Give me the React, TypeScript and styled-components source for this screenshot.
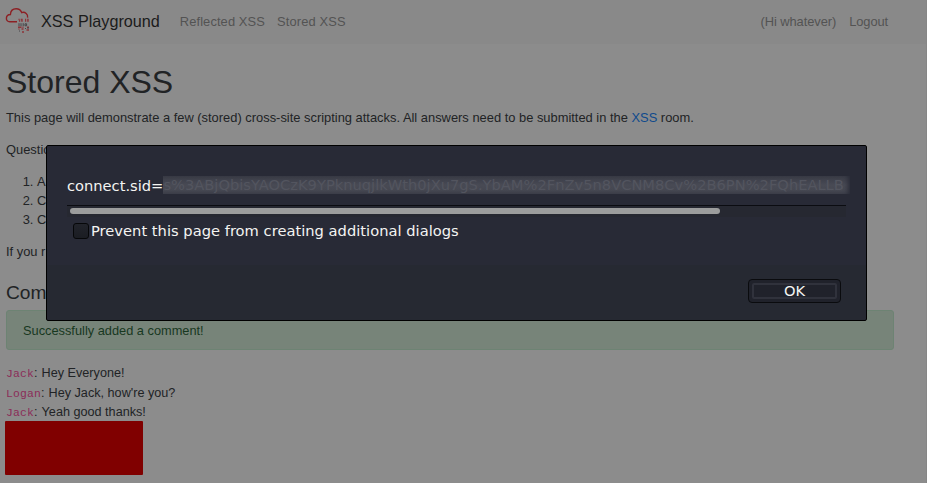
import React from 'react';
import styled, { createGlobalStyle } from 'styled-components';

const GlobalStyle = createGlobalStyle`
  * { box-sizing: border-box; }
  html, body { margin: 0; height: 483px; overflow: hidden; background: #8c8c8c; }
  body { font: 12.9px/19px "Liberation Sans", Arial, sans-serif; color: #212325; }
`;

const Page = styled.div`
  height: 483px;
  overflow: hidden;
  border-right: 1px solid #868686;
`;
const Navbar = styled.nav`
  height: 44px;
  display: flex;
  align-items: center;
  padding: 0 38px 2px 5px;
  background: #898989;
  color: #535353;
`;
const Brand = styled.div`
  font-size: 16.2px;
  color: #1b1b1b;
  margin: 0 20px 0 10px;
`;
const NavItem = styled.span<{ $gap?: number; $spacing?: number }>`
  margin-right: ${(p) => p.$gap ?? 0}px;
  letter-spacing: ${(p) => p.$spacing ?? 0}px;
  white-space: nowrap;
`;
const Spacer = styled.div`
  flex: 1;
`;
const Content = styled.main`
  padding: 18px 32px 0 6px;
`;
const Title = styled.h1`
  margin: 0 0 6px;
  font-size: 32px;
  line-height: 40px;
  font-weight: 400;
`;
const Paragraph = styled.p`
  margin: 0 0 13px;
  line-height: 19px;
`;
const Link = styled.span`
  color: #0f4a8c;
`;
const Questions = styled.ol`
  margin: 0 0 13px;
  padding-left: 31px;
`;
const Subtitle = styled.h2`
  margin: 20px 0 5px;
  font-size: 19.2px;
  line-height: 24px;
  font-weight: 400;
`;
const Alert = styled.div`
  height: 40px;
  padding: 10px 16px;
  margin-bottom: 14px;
  border: 1px solid #6d8373;
  border-radius: 3px;
  background: #778479;
  color: #17381f;
  font-size: 12.8px;
`;
const Comment = styled.div`
  height: 19.5px;
  line-height: 19px;
  font-size: 12.65px;
`;
const Author = styled.code`
  font: 11.4px "Liberation Mono", monospace;
  letter-spacing: 0.15px;
  color: #8b2d59;
`;
const CommentText = styled.span`
  margin-left: 0.6px;
`;
const RedBox = styled.div`
  width: 138px;
  height: 54px;
  margin: -2px 0 0 -1px;
  border-radius: 1px;
  background: #800000;
`;

const Dialog = styled.section`
  position: absolute;
  left: 46px;
  top: 145px;
  width: 821px;
  height: 176px;
  padding: 30px 20px 0;
  border: 1px solid #000;
  border-radius: 2px;
  background: linear-gradient(#282a36 0 119px, #262932 119px);
  color: #f4f4f2;
  font: 14.67px/20px "DejaVu Sans", sans-serif;
`;
const Message = styled.div`
  display: flex;
  height: 29px;
  width: 784px;
  white-space: nowrap;
`;
const Redacted = styled.span`
  flex: 0 0 687px;
  height: 18px;
  line-height: 18px;
  overflow: hidden;
  color: #53555f;
  background: linear-gradient(#393b46, #484a54 50%, #454751 80%, #3d3f4a);
  box-shadow: inset -5px 0 5px -3px #282a36;
`;
const ScrollTrack = styled.div`
  width: 779px;
  height: 12px;
  padding: 3px;
  border-top: 1px solid #0b0c11;
  background: #262831;
`;
const ScrollThumb = styled.div`
  width: 650px;
  height: 6px;
  margin-top: -1px;
  border-radius: 3px;
  background: #9c9d9d;
`;
const Option = styled.label`
  display: flex;
  align-items: center;
  gap: 2px;
  margin: 4px 0 0 6px;
  height: 20px;
  letter-spacing: 0.02px;
`;
const CheckBox = styled.span`
  width: 16px;
  height: 16px;
  border: 1px solid #060709;
  border-radius: 3px;
  background: linear-gradient(#22242b, #1b1d23);
`;
const Actions = styled.div`
  display: flex;
  justify-content: flex-end;
  margin: 38px 5px 0 0;
`;
const OkButton = styled.button`
  width: 93px;
  height: 24px;
  padding: 3px;
  border: 1px solid #0a0b0e;
  border-radius: 4px;
  background: #20222b;
  color: inherit;
  font: inherit;
`;
const FocusRing = styled.span`
  display: block;
  height: 16px;
  border: 2px solid #30323c;
  border-radius: 2px;
  line-height: 11px;
`;

const CloudLogo = () => (
  <svg width="26" height="28" viewBox="0 0 26 28" fill="none">
    <path
      d="M12 14.8H4.8C2.4 14.8 1.3 13 1.4 11.1C1.5 8.9 3 7.6 5.4 7.5C5.7 3.9 8 1.8 11.1 1.8C14 1.8 15.9 3.4 16.7 5.6C20.1 4.5 23.3 7.3 22.6 10.6"
      stroke="#8d2024"
      strokeWidth="1.4"
    />
    <path
      d="M13.5 12.5h1.2m1 0h2M20 12.5h1.2m1 0h1.5M14 14h1.2m1 0h1.5M20 14h1.2m1 0h1.5M13 20.2h3.5m1 0h1M13.5 22h1m2 0h2m3 1h2.5M17 25h2M22 20.2h2"
      stroke="#8d353a"
      strokeWidth="1.4"
    />
    <path d="M14 16.2v3M16 16.2v3M18.2 16.2v3M20 16.8h1.6v2H20zM20 21.5h1m1-.5h2M14 24h1" stroke="#454548" strokeWidth="1" />
  </svg>
);

const comments = [
  ['Jack', 'Hey Everyone!'],
  ['Logan', "Hey Jack, how're you?"],
  ['Jack', 'Yeah good thanks!'],
];

export default function App() {
  return (
    <>
      <GlobalStyle />
      <Page>
        <Navbar>
          <CloudLogo />
          <Brand>XSS Playground</Brand>
          <NavItem $gap={12} $spacing={0.1}>
            Reflected XSS
          </NavItem>
          <NavItem $spacing={0.15}>Stored XSS</NavItem>
          <Spacer />
          <NavItem $gap={13} $spacing={-0.08}>
            (Hi whatever)
          </NavItem>
          <NavItem $spacing={-0.1}>Logout</NavItem>
        </Navbar>
        <Content>
          <Title>Stored XSS</Title>
          <Paragraph>
            This page will demonstrate a few (stored) cross-site scripting attacks. All answers need to be submitted in
            the <Link>XSS</Link> room.
          </Paragraph>
          <Paragraph>Questio</Paragraph>
          <Questions>
            <li>A</li>
            <li>C</li>
            <li>C</li>
          </Questions>
          <Paragraph>If you r</Paragraph>
          <Subtitle>Com</Subtitle>
          <Alert>Successfully added a comment!</Alert>
          {comments.map(([name, text]) => (
            <Comment key={text}>
              <Author>{name}</Author>: <CommentText>{text}</CommentText>
            </Comment>
          ))}
          <RedBox />
        </Content>
      </Page>
      <Dialog role="dialog">
        <Message>
          connect.sid=
          <Redacted>s%3ABjQbisYAOCzK9YPknuqjlkWth0jXu7gS.YbAM%2FnZv5n8VCNM8Cv%2B6PN%2FQhEALLB</Redacted>
        </Message>
        <ScrollTrack>
          <ScrollThumb />
        </ScrollTrack>
        <Option>
          <CheckBox />
          Prevent this page from creating additional dialogs
        </Option>
        <Actions>
          <OkButton>
            <FocusRing>OK</FocusRing>
          </OkButton>
        </Actions>
      </Dialog>
    </>
  );
}
